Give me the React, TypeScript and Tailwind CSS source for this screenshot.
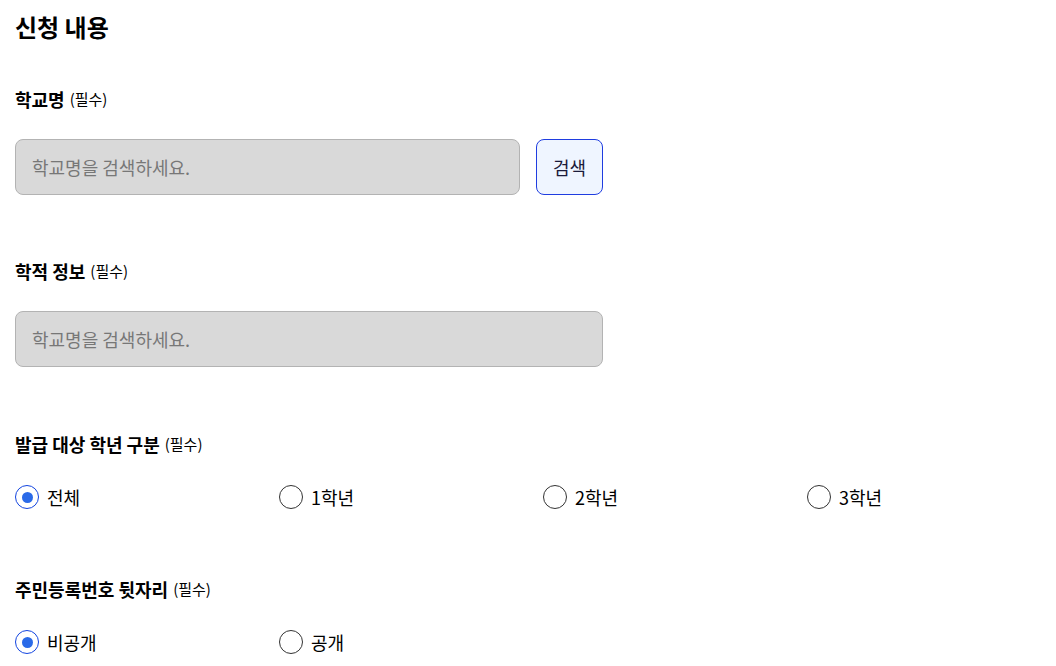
import { useState } from "react";

const font = { fontFamily: '"Noto Sans CJK KR", "Noto Sans", sans-serif' };

const Label = ({ text }: { text: string }) => (
  <p className="flex h-[24px] items-center gap-[5px] leading-[24px] text-black">
    <span className="text-[18px] font-bold">{text}</span>
    <span className="text-[15px]">(필수)</span>
  </p>
);

interface RadioProps {
  label: string;
  checked: boolean;
  onClick: () => void;
}

const Radio = ({ label, checked, onClick }: RadioProps) => (
  <div onClick={onClick} className="flex h-[24px] cursor-pointer items-center gap-[8px]">
    {checked ? (
      <span className="flex h-[24px] w-[24px] items-center justify-center rounded-full border-[1.5px] border-[#1244e0]">
        <span className="h-[11px] w-[11px] rounded-full bg-[#2a6ae8]" />
      </span>
    ) : (
      <span className="h-[24px] w-[24px] rounded-full border border-[#333]" />
    )}
    <span className="text-[18px] leading-[24px] text-black">{label}</span>
  </div>
);

export default function App() {
  const [grade, setGrade] = useState("전체");
  const [privacy, setPrivacy] = useState("비공개");

  return (
    <div className="min-h-screen bg-white px-[15px]" style={font}>
      <h2 className="pt-[11px] text-[24px] font-bold leading-[32px] text-black">신청 내용</h2>

      <div className="mt-[44px]">
        <Label text="학교명" />
      </div>
      <div className="mt-[28px] flex gap-[16px]">
        <input
          placeholder="학교명을 검색하세요."
          className="h-[56px] w-[505px] rounded-[8px] border border-[#b3b3b3] bg-[#d9d9d9] px-[16px] text-[18px] placeholder:text-[#777]"
        />
        <button className="h-[56px] w-[67px] rounded-[8px] border border-[#1f3de0] bg-[#eff5ff] text-[18px] text-[#1a1a3a]">
          검색
        </button>
      </div>

      <div className="mt-[64px]">
        <Label text="학적 정보" />
      </div>
      <input
        placeholder="학교명을 검색하세요."
        className="mt-[28px] h-[56px] w-[588px] rounded-[8px] border border-[#b3b3b3] bg-[#d9d9d9] px-[16px] text-[18px] placeholder:text-[#777]"
      />

      <div className="mt-[65px]">
        <Label text="발급 대상 학년 구분" />
      </div>
      <div className="mt-[29px] grid grid-cols-[repeat(4,264px)]">
        {["전체", "1학년", "2학년", "3학년"].map((g) => (
          <Radio key={g} label={g} checked={grade === g} onClick={() => setGrade(g)} />
        ))}
      </div>

      <div className="mt-[68px]">
        <Label text="주민등록번호 뒷자리" />
      </div>
      <div className="mt-[29px] grid grid-cols-[repeat(4,264px)]">
        {["비공개", "공개"].map((p) => (
          <Radio key={p} label={p} checked={privacy === p} onClick={() => setPrivacy(p)} />
        ))}
      </div>
    </div>
  );
}
